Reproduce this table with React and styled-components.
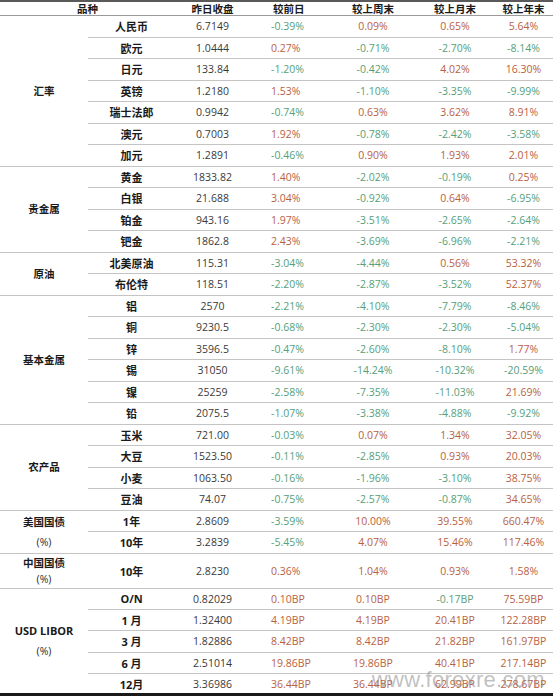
import React from "react";
import styled, { createGlobalStyle } from "styled-components";

const GlobalStyle = createGlobalStyle`
  html, body { margin: 0; padding: 0; background: #ffffff; }
  body { font-family: "Open Sans", "Noto Sans CJK SC", sans-serif; }
`;

const RED = "#b8613f";
const GREEN = "#56a079";
const LINE = "#c4c4c4";

const Sheet = styled.div`
  position: relative;
  width: 553px;
  height: 696px;
  overflow: hidden;
  background: #fff;
`;

const Table = styled.table`
  width: 553px;
  border-collapse: collapse;
  table-layout: fixed;
  border-top: 2px solid #5a5a5a;
  border-bottom: 3px solid #1a1a1a;
`;

const HeadCell = styled.th`
  height: 13px;
  padding: 0;
  padding-left: ${(p) => (p.$align === "left" ? "23px" : "0")};
  font-family: "Noto Sans CJK SC", sans-serif;
  font-size: 10.5px;
  line-height: 13px;
  font-weight: 700;
  color: #1a1a1a;
  text-align: ${(p) => p.$align || "center"};
  border-bottom: 1px solid #9a9a9a;
  white-space: nowrap;
`;

const Row = styled.tr`
  height: ${(p) => p.$h || 21.5}px;
`;

const GroupCell = styled.td`
  padding: 0;
  text-align: center;
  vertical-align: middle;
  border-bottom: 1.5px solid ${LINE};
  font-family: "Noto Sans CJK SC", sans-serif;
  font-weight: 700;
  font-size: 10.5px;
  line-height: ${(p) => (p.$tight ? 16 : 20)}px;
  color: #1a1a1a;
`;

const GroupLatin = styled.span`
  font-family: "Open Sans", "Noto Sans CJK SC", sans-serif;
  font-size: 11px;
  font-weight: 700;
`;

const Unit = styled.span`
  display: block;
  font-family: "Open Sans", sans-serif;
  font-weight: 400;
  font-size: 10.5px;
  color: #2a2a2a;
`;

const NameCell = styled.td`
  padding: 0;
  text-align: center;
  vertical-align: middle;
  border-bottom: 1.5px solid ${LINE};
  font-family: "Open Sans", "Noto Sans CJK SC", sans-serif;
  font-weight: 700;
  font-size: 11px;
  color: #1a1a1a;
  white-space: nowrap;
`;

const CloseCell = styled.td`
  padding: 0;
  text-align: center;
  vertical-align: middle;
  border-bottom: 1.5px solid ${LINE};
  font-size: 10.5px;
  color: #3a3a3a;
  white-space: nowrap;
`;

const ChangeCell = styled.td`
  padding: 0;
  padding-left: ${(p) => (p.$align === "left" ? "21px" : "0")};
  text-align: ${(p) => p.$align || "center"};
  vertical-align: middle;
  border-bottom: 1.5px solid ${LINE};
  font-size: 10.5px;
  color: ${(p) => (p.$neg ? GREEN : RED)};
  white-space: nowrap;
`;

const Watermark = styled.div`
  position: absolute;
  right: 8px;
  bottom: 3px;
  font-family: "Liberation Sans", Arial, sans-serif;
  font-size: 22px;
  letter-spacing: 0.3px;
  color: rgba(140, 140, 140, 0.55);
  pointer-events: none;
`;

const groups = [
  {
    label: "汇率",
    rows: [
      ["人民币", "6.7149", "-0.39%", "0.09%", "0.65%", "5.64%"],
      ["欧元", "1.0444", "0.27%", "-0.71%", "-2.70%", "-8.14%"],
      ["日元", "133.84", "-1.20%", "-0.42%", "4.02%", "16.30%"],
      ["英镑", "1.2180", "1.53%", "-1.10%", "-3.35%", "-9.99%"],
      ["瑞士法郎", "0.9942", "-0.74%", "0.63%", "3.62%", "8.91%"],
      ["澳元", "0.7003", "1.92%", "-0.78%", "-2.42%", "-3.58%"],
      ["加元", "1.2891", "-0.46%", "0.90%", "1.93%", "2.01%"],
    ],
  },
  {
    label: "贵金属",
    rows: [
      ["黄金", "1833.82", "1.40%", "-2.02%", "-0.19%", "0.25%"],
      ["白银", "21.688", "3.04%", "-0.92%", "0.64%", "-6.95%"],
      ["铂金", "943.16", "1.97%", "-3.51%", "-2.65%", "-2.64%"],
      ["钯金", "1862.8", "2.43%", "-3.69%", "-6.96%", "-2.21%"],
    ],
  },
  {
    label: "原油",
    rows: [
      ["北美原油", "115.31", "-3.04%", "-4.44%", "0.56%", "53.32%"],
      ["布伦特", "118.51", "-2.20%", "-2.87%", "-3.52%", "52.37%"],
    ],
  },
  {
    label: "基本金属",
    rows: [
      ["铝", "2570", "-2.21%", "-4.10%", "-7.79%", "-8.46%"],
      ["铜", "9230.5", "-0.68%", "-2.30%", "-2.30%", "-5.04%"],
      ["锌", "3596.5", "-0.47%", "-2.60%", "-8.10%", "1.77%"],
      ["锡", "31050", "-9.61%", "-14.24%", "-10.32%", "-20.59%"],
      ["镍", "25259", "-2.58%", "-7.35%", "-11.03%", "21.69%"],
      ["铅", "2075.5", "-1.07%", "-3.38%", "-4.88%", "-9.92%"],
    ],
  },
  {
    label: "农产品",
    rows: [
      ["玉米", "721.00", "-0.03%", "0.07%", "1.34%", "32.05%"],
      ["大豆", "1523.50", "-0.11%", "-2.85%", "0.93%", "20.03%"],
      ["小麦", "1063.50", "-0.16%", "-1.96%", "-3.10%", "38.75%"],
      ["豆油", "74.07", "-0.75%", "-2.57%", "-0.87%", "34.65%"],
    ],
  },
  {
    label: "美国国债",
    unit: "(%)",
    rows: [
      ["1年", "2.8609", "-3.59%", "10.00%", "39.55%", "660.47%"],
      ["10年", "3.2839", "-5.45%", "4.07%", "15.46%", "117.46%"],
    ],
  },
  {
    label: "中国国债",
    unit: "(%)",
    height: 35,
    tight: true,
    rows: [["10年", "2.8230", "0.36%", "1.04%", "0.93%", "1.58%"]],
  },
  {
    label: "USD LIBOR",
    latin: true,
    unit: "(%)",
    height: 21.4,
    rows: [
      ["O/N", "0.82029", "0.10BP", "0.10BP", "-0.17BP", "75.59BP"],
      ["1 月", "1.32400", "4.19BP", "4.19BP", "20.41BP", "122.28BP"],
      ["3 月", "1.82886", "8.42BP", "8.42BP", "21.82BP", "161.97BP"],
      ["6 月", "2.51014", "19.86BP", "19.86BP", "40.41BP", "217.14BP"],
      ["12月", "3.36986", "36.44BP", "36.44BP", "62.99BP", "278.67BP"],
    ],
  },
];

const isNeg = (v) => v.trim().startsWith("-");

export default function App() {
  return (
    <Sheet>
      <GlobalStyle />
      <Table>
        <colgroup>
          <col style={{ width: 88 }} />
          <col style={{ width: 87 }} />
          <col style={{ width: 75 }} />
          <col style={{ width: 80 }} />
          <col style={{ width: 86 }} />
          <col style={{ width: 78 }} />
          <col style={{ width: 59 }} />
        </colgroup>
        <thead>
          <tr>
            <HeadCell colSpan={2}>品种</HeadCell>
            <HeadCell>昨日收盘</HeadCell>
            <HeadCell $align="left">较前日</HeadCell>
            <HeadCell>较上周末</HeadCell>
            <HeadCell>较上月末</HeadCell>
            <HeadCell>较上年末</HeadCell>
          </tr>
        </thead>
        <tbody>
          {groups.map((g) =>
            g.rows.map((r, i) => (
              <Row key={g.label + r[0]} $h={g.height}>
                {i === 0 && (
                  <GroupCell rowSpan={g.rows.length} $tight={g.tight}>
                    {g.latin ? <GroupLatin>{g.label}</GroupLatin> : g.label}
                    {g.unit && <Unit>{g.unit}</Unit>}
                  </GroupCell>
                )}
                <NameCell>{r[0]}</NameCell>
                <CloseCell>{r[1]}</CloseCell>
                <ChangeCell $align="left" $neg={isNeg(r[2])}>
                  {r[2]}
                </ChangeCell>
                <ChangeCell $neg={isNeg(r[3])}>{r[3]}</ChangeCell>
                <ChangeCell $neg={isNeg(r[4])}>{r[4]}</ChangeCell>
                <ChangeCell $neg={isNeg(r[5])}>{r[5]}</ChangeCell>
              </Row>
            ))
          )}
        </tbody>
      </Table>
      <Watermark>www.forexre.com</Watermark>
    </Sheet>
  );
}
